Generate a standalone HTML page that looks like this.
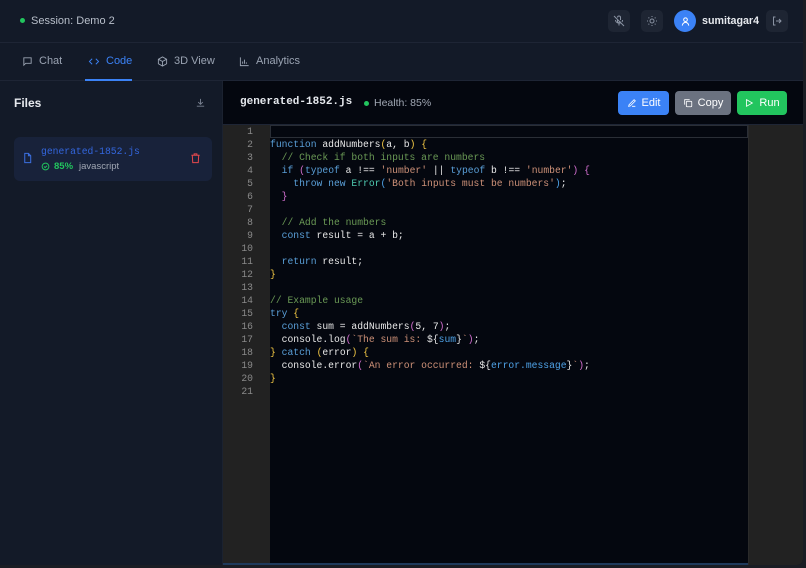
<!DOCTYPE html>
<html><head><meta charset="utf-8"><style>
*{box-sizing:border-box;margin:0;padding:0}
body{width:806px;height:568px;background:#1a1d24;font-family:"Liberation Sans",sans-serif;overflow:hidden;position:relative}
.app{position:absolute;left:0;top:0;width:803px;height:565px;background:#131a28;border-radius:0 0 6px 0;overflow:hidden}
.hdr{position:absolute;left:0;top:0;width:803px;height:43px;border-bottom:1px solid #1e2535}
.tabs{position:absolute;left:0;top:43px;width:803px;height:38px;border-bottom:1px solid #1e2535}
.t{position:absolute;top:12px;font-size:11px;color:#9aa3b2;display:flex;align-items:center;gap:6px}
.ib{position:absolute;top:10px;width:22px;height:22px;border-radius:5px;background:#1e2533;display:flex;align-items:center;justify-content:center}
.side{position:absolute;left:0;top:81px;width:223px;height:484px;border-right:1px solid #1b2230}
.ed{position:absolute;left:223px;top:81px;width:580px;height:484px;background:#04070f}
.gut{position:absolute;left:0;top:44px;width:47px;height:440px;background:#222222}
.mm{position:absolute;left:525px;top:44px;width:55px;height:440px;background:#222222;border-left:1px solid #2a2a2a}
.code{position:absolute;left:47px;top:44px;font-family:"Liberation Mono",monospace;font-size:9.7px;line-height:13px;color:#e8e8e8;white-space:pre}
.ln{position:absolute;left:0;top:44px;width:30px;text-align:right;font-family:"Liberation Mono",monospace;font-size:9.7px;line-height:13px;color:#8a8a8a;white-space:pre}
.k{color:#5a9fd8}.c{color:#6a9955}.s{color:#ce9178}.y{color:#f2c744}.p{color:#d36fd0}.g{color:#4ec9b0}.b{color:#4fa3e8}
.btn{position:absolute;top:10px;height:24px;border-radius:4px;color:#fff;font-size:11px;display:flex;align-items:center;justify-content:center;gap:5px}
</style></head><body>
<div class="app">
<div class="hdr">
 <div style="position:absolute;left:20px;top:18px;width:5px;height:5px;border-radius:50%;background:#22c55e"></div>
 <div style="position:absolute;left:31px;top:15px;font-size:11px;color:#b8bfca">Session: Demo 2</div>
 <div class="ib" style="left:608px"><svg width="12" height="12" viewBox="0 0 24 24" fill="none" stroke="#8a93a3" stroke-width="2"><path d="M2 2l20 20M9 5a3 3 0 016 0v5M15 13a3 3 0 01-6-1V9M19 10a7 7 0 01-1 4M5 10a7 7 0 0011 5M12 17v4"/></svg></div>
 <div class="ib" style="left:641px"><svg width="12" height="12" viewBox="0 0 24 24" fill="none" stroke="#8a93a3" stroke-width="2"><circle cx="12" cy="12" r="4"/><path d="M12 2v2M12 20v2M2 12h2M20 12h2M5 5l1.5 1.5M17.5 17.5L19 19M5 19l1.5-1.5M17.5 6.5L19 5"/></svg></div>
 <div style="position:absolute;left:674px;top:10px;width:22px;height:22px;border-radius:50%;background:#3b82f6;display:flex;align-items:center;justify-content:center"><svg width="11" height="11" viewBox="0 0 24 24" fill="none" stroke="#fff" stroke-width="2.2"><circle cx="12" cy="8" r="4"/><path d="M5 21a7 7 0 0114 0"/></svg></div>
 <div style="position:absolute;left:702px;top:15px;font-size:10.7px;color:#e6e9ee;font-weight:bold">sumitagar4</div>
 <div class="ib" style="left:766px"><svg width="12" height="12" viewBox="0 0 24 24" fill="none" stroke="#8a93a3" stroke-width="2"><path d="M9 4H5v16h4M16 8l4 4-4 4M20 12H10"/></svg></div>
</div>
<div class="tabs">
 <div class="t" style="left:22px"><svg width="11" height="11" viewBox="0 0 24 24" fill="none" stroke="#9aa3b2" stroke-width="2"><path d="M4 4h16v12H8l-4 4z"/></svg>Chat</div>
 <div class="t" style="left:88px;color:#3b82f6"><svg width="12" height="11" viewBox="0 0 24 24" fill="none" stroke="#3b82f6" stroke-width="2"><path d="M8 6l-6 6 6 6M16 6l6 6-6 6"/></svg>Code</div>
 <div style="position:absolute;left:85px;top:36px;width:47px;height:2px;background:#3b82f6"></div>
 <div class="t" style="left:157px"><svg width="11" height="11" viewBox="0 0 24 24" fill="none" stroke="#9aa3b2" stroke-width="2"><path d="M12 2l9 5v10l-9 5-9-5V7zM3 7l9 5 9-5M12 12v10"/></svg>3D View</div>
 <div class="t" style="left:239px"><svg width="11" height="11" viewBox="0 0 24 24" fill="none" stroke="#9aa3b2" stroke-width="2"><path d="M3 3v18h18M8 17v-5M12 17V8M16 17v-3"/></svg>Analytics</div>
</div>
<div class="side">
 <div style="position:absolute;left:14px;top:15px;font-size:12px;font-weight:bold;color:#e6e9ee">Files</div>
 <svg style="position:absolute;left:195px;top:16px" width="11" height="11" viewBox="0 0 24 24" fill="none" stroke="#7a8292" stroke-width="2"><path d="M12 4v12M7 11l5 5 5-5M4 20h16"/></svg>
 <div style="position:absolute;left:14px;top:56px;width:198px;height:44px;border-radius:6px;background:#18223a">
  <svg style="position:absolute;left:8px;top:15px" width="11" height="12" viewBox="0 0 24 24" fill="none" stroke="#3b6fe0" stroke-width="2.2"><path d="M6 2h8l5 5v15H6zM14 2v5h5"/></svg>
  <div style="position:absolute;left:27px;top:9px;font-family:'Liberation Mono',monospace;font-size:9.7px;color:#3366dd">generated-1852.js</div>
  <div style="position:absolute;left:27px;top:24px;font-size:9.5px;color:#22c55e;display:flex;align-items:center;gap:4px"><svg width="9" height="9" viewBox="0 0 24 24" fill="none" stroke="#22c55e" stroke-width="2.5"><circle cx="12" cy="12" r="9"/><path d="M8 12l3 3 5-5"/></svg><b>85%</b><span style="color:#a0a7b3;margin-left:2px">javascript</span></div>
  <svg style="position:absolute;left:176px;top:15px" width="11" height="12" viewBox="0 0 24 24" fill="none" stroke="#e5484d" stroke-width="2.2"><path d="M3 6h18M9 6V3h6v3M5 6l1 16h12l1-16"/></svg>
 </div>
</div>
<div class="ed">
 <div style="position:absolute;left:17px;top:15px;font-family:'Liberation Mono',monospace;font-size:11px;font-weight:bold;color:#e6e9ee">generated-1852.js</div>
 <div style="position:absolute;left:141px;top:20px;width:5px;height:5px;border-radius:50%;background:#22c55e"></div>
 <div style="position:absolute;left:151px;top:16px;font-size:10.5px;color:#a0a7b3">Health: 85%</div>
 <div class="btn" style="left:395px;width:51px;background:#3b82f6"><svg width="10" height="10" viewBox="0 0 24 24" fill="none" stroke="#fff" stroke-width="2"><path d="M4 20l4-1L20 7l-3-3L5 16zM12 20h8"/></svg>Edit</div>
 <div class="btn" style="left:452px;width:56px;background:#6b7280"><svg width="10" height="10" viewBox="0 0 24 24" fill="none" stroke="#fff" stroke-width="2"><rect x="8" y="8" width="13" height="13" rx="2"/><path d="M4 16V4h12"/></svg>Copy</div>
 <div class="btn" style="left:514px;width:50px;background:#22c55e"><svg width="10" height="10" viewBox="0 0 24 24" fill="none" stroke="#fff" stroke-width="2"><path d="M6 4l14 8-14 8z"/></svg>Run</div>
 <div style="position:absolute;left:0;top:43px;width:580px;height:1px;background:#1e2535"></div>
 <div class="gut"></div>
 <div style="position:absolute;left:47px;top:44px;width:478px;height:13px;border:1px solid #2a2e36"></div>
 <div class="ln">1
2
3
4
5
6
7
8
9
10
11
12
13
14
15
16
17
18
19
20
21</div>
<div class="code">
<span class="k">function</span> addNumbers<span class="y">(</span>a, b<span class="y">)</span> <span class="y">{</span>
  <span class="c">// Check if both inputs are numbers</span>
  <span class="k">if</span> <span class="p">(</span><span class="k">typeof</span> a !== <span class="s">'number'</span> || <span class="k">typeof</span> b !== <span class="s">'number'</span><span class="p">)</span> <span class="p">{</span>
    <span class="k">throw new</span> <span class="g">Error</span><span class="b">(</span><span class="s">'Both inputs must be numbers'</span><span class="b">)</span>;
  <span class="p">}</span>

  <span class="c">// Add the numbers</span>
  <span class="k">const</span> result = a + b;

  <span class="k">return</span> result;
<span class="y">}</span>

<span class="c">// Example usage</span>
<span class="k">try</span> <span class="y">{</span>
  <span class="k">const</span> sum = addNumbers<span class="p">(</span>5, 7<span class="p">)</span>;
  console.log<span class="p">(</span><span class="s">`The sum is: </span>${<span class="b">sum</span>}<span class="s">`</span><span class="p">)</span>;
<span class="y">}</span> <span class="k">catch</span> <span class="y">(</span>error<span class="y">)</span> <span class="y">{</span>
  console.error<span class="p">(</span><span class="s">`An error occurred: </span>${<span class="b">error.message</span>}<span class="s">`</span><span class="p">)</span>;
<span class="y">}</span>
</div>
 <div class="mm"></div>
 <div style="position:absolute;left:0;top:482px;width:525px;height:2px;background:#1f3a5c"></div>
</div>
</div>
</body></html>
